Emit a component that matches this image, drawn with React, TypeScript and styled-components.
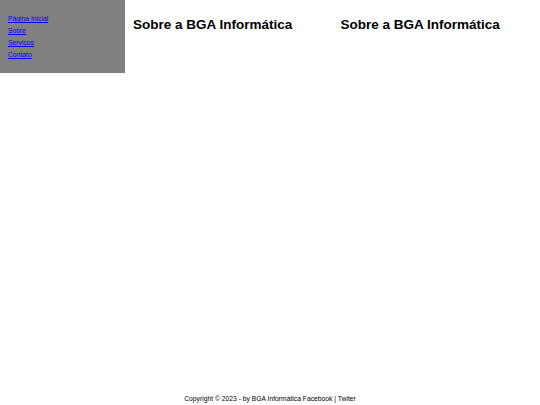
import React from "react";
import styled, { createGlobalStyle } from "styled-components";

const Global = createGlobalStyle`
  html, body { margin: 0; padding: 0; background: #ffffff; }
  body { font-family: "Liberation Sans", Arial, sans-serif; color: #000; }
`;

const Page = styled.div`
  display: flex;
  flex-direction: column;
  min-height: 100vh;
`;

const Top = styled.div`
  display: flex;
  align-items: flex-start;
`;

const Sidebar = styled.nav`
  width: 125px;
  flex: 0 0 125px;
  background: #808080;
  padding: 13px 8px 12px;
  box-sizing: border-box;
`;

const NavList = styled.ul`
  list-style: none;
  margin: 0;
  padding: 0;
`;

const NavItem = styled.li`
  font-size: 6.75px;
  line-height: 12px;
`;

const NavLink = styled.a`
  color: #0000ee;
  text-decoration: underline;
`;

const Main = styled.main`
  flex: 1;
  display: grid;
  grid-template-columns: 1fr 1fr;
`;

const Section = styled.section`
  padding: 0 8px;
`;

const Heading = styled.h2`
  margin: 17px 0 0;
  font-size: 13.5px;
  line-height: 16px;
  font-weight: bold;
  white-space: nowrap;
`;

const Footer = styled.footer`
  margin-top: auto;
  text-align: center;
  font-size: 6.75px;
  line-height: 12px;
`;

export default function App() {
  const links = ["Página Inicial", "Sobre", "Serviços", "Contato"];
  return (
    <>
      <Global />
      <Page>
        <Top>
          <Sidebar>
            <NavList>
              {links.map((l) => (
                <NavItem key={l}>
                  <NavLink href="#">{l}</NavLink>
                </NavItem>
              ))}
            </NavList>
          </Sidebar>
          <Main>
            <Section>
              <Heading>Sobre a BGA Informática</Heading>
            </Section>
            <Section>
              <Heading>Sobre a BGA Informática</Heading>
            </Section>
          </Main>
        </Top>
        <Footer>Copyright © 2023 - by BGA Informática Facebook | Twiter</Footer>
      </Page>
    </>
  );
}
